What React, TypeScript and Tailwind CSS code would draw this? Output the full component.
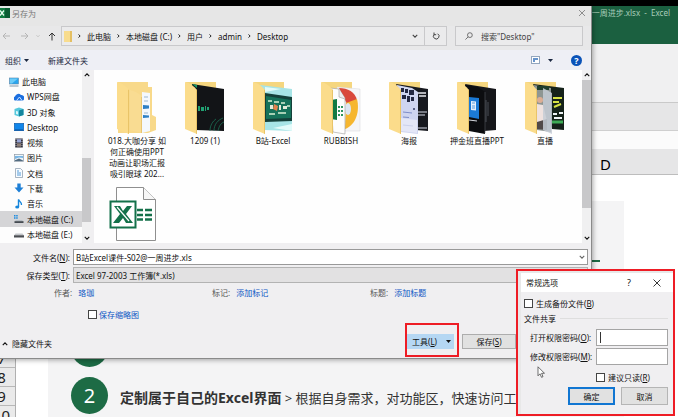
import React from 'react';
import type { ReactNode } from 'react';

const Chevron = ({ d, className }: { d: string; className: string }) => (
  <svg viewBox="0 0 8 8" className={className} fill="none" stroke="currentColor" strokeWidth="1.5" aria-hidden="true">
    <path d={d} />
  </svg>
);
const RIGHT = 'M2.5 1.5 5 4 2.5 6.5';
const DOWN = 'M1 2.5 4 5.5 7 2.5';
const UP = 'M1 5.5 4 2.5 7 5.5';

const Caret = () => (
  <svg viewBox="0 0 5 3" className="h-[3px] w-[5px]" aria-hidden="true">
    <path d="M0 0h5L2.500 3z" fill="currentColor" />
  </svg>
);

const ExcelBadge = () => (
  <svg viewBox="0 0 10 10" className="h-2.5 w-2.5 shrink-0" aria-hidden="true">
    <rect width="10" height="10" fill="#107c41" />
    <path d="M5 0h5v10H5z" fill="#0a5c33" />
    <path d="M0 2.5 4 7.5M4 2.5 0 7.5" stroke="#e8fff0" strokeWidth="1.3" />
  </svg>
);

/* Sidebar */

type Place = { name: string; icon: ReactNode; root?: boolean; active?: boolean };

const places: Place[] = [
  {
    name: '此电脑',
    root: true,
    icon: (
      <>
        <rect x="0.5" y="1" width="9" height="6" fill="#2aa5ee" stroke="#5b86a8" strokeWidth="0.6" />
        <path d="M1 1.500h8L3 6.500H1z" fill="#6bcbf8" />
        <path d="M0.500 9h9" stroke="#7f95a8" />
      </>
    ),
  },
  {
    name: 'WPS网盘',
    icon: (
      <>
        <path d="M1 8.500a2.200 2.200 0 0 1 0-4A3.500 3.500 0 0 1 7 3a3 3 0 0 1 2 5.500z" fill="#1b6fe0" />
        <path d="M2.500 8.500 5.500 5 8 8.500" stroke="#cfe6ff" strokeWidth="1" fill="none" />
      </>
    ),
  },
  {
    name: '3D 对象',
    icon: (
      <>
        <path d="M0.500 2 5 0.500 9.500 2v6L5 9.500 0.500 8z" fill="#55c8dc" />
        <path d="M5 3.500 9.500 2v6L5 9.500z" fill="#16869e" />
        <path d="M2 4l2 .6v3L2 7z" fill="#d9f7fb" />
      </>
    ),
  },
  {
    name: 'Desktop',
    icon: (
      <>
        <rect x="0.300" y="1.300" width="9.400" height="7.400" fill="#1186ea" stroke="#0a58a5" strokeWidth="0.600" />
        <path d="M1 8h8" stroke="#0b4f97" />
      </>
    ),
  },
  {
    name: '视频',
    icon: (
      <>
        <rect x="1.200" y="0.500" width="7.600" height="9" fill="#33333f" />
        <path d="M2 1v8M8 1v8" stroke="#c9c9d4" strokeDasharray="1 1" strokeWidth="0.800" />
        <rect x="3" y="1.200" width="4" height="3.300" fill="#98a5d6" />
        <rect x="3" y="5.300" width="4" height="3.300" fill="#8d7f78" />
      </>
    ),
  },
  {
    name: '图片',
    icon: (
      <>
        <rect x="0.500" y="1.500" width="9" height="7" fill="#eef6fb" stroke="#8f9aa5" strokeWidth="0.700" />
        <path d="M1 3h8v2L5 4.500 1 6z" fill="#79b6e5" />
        <path d="M1 7.200 5 5.500l4 2v.5H1z" fill="#526b80" />
      </>
    ),
  },
  {
    name: '文档',
    icon: (
      <>
        <path d="M1.500.5h5l2 2v7h-7z" fill="#f7fbff" stroke="#8496a8" strokeWidth="0.700" />
        <path d="M3 3h2M3 5h4M3 7h4" stroke="#3f8fd2" strokeWidth="0.900" />
      </>
    ),
  },
  { name: '下载', icon: <path d="M3.300.500h3.400v4h2.800L5 9.500.5 4.500h2.800z" fill="#1d7fd6" /> },
  {
    name: '音乐',
    icon: (
      <>
        <path d="M4.500.5v7.500" stroke="#1686dc" strokeWidth="1.400" />
        <path d="M4.500.5c.5 2 3.500 2.500 3 5.500" stroke="#1686dc" strokeWidth="1.300" fill="none" />
        <ellipse cx="3.200" cy="8" rx="2" ry="1.500" fill="#1686dc" />
      </>
    ),
  },
  {
    name: '本地磁盘 (C:)',
    active: true,
    icon: (
      <>
        <path d="M0 1h1.500v1.500H0zM2.200 1h1.500v1.500H2.200zM0 3.200h1.500v1.500H0zM2.200 3.200h1.500v1.500H2.200z" fill="#1a8be0" />
        <path d="M2 6h6l1.500 1.500H.5z" fill="#b8bec4" />
        <rect x="0.500" y="7.200" width="9" height="1.800" fill="#454b52" />
      </>
    ),
  },
  {
    name: '本地磁盘 (E:)',
    icon: (
      <>
        <path d="M1.500 4.500h7L10 6.500H0z" fill="#c3c6ca" />
        <rect y="6.300" width="10" height="2.200" fill="#4a4d52" />
      </>
    ),
  },
];

/* Folder thumbnails, drawn on a 40 x 53 grid */

const Folder = ({ children }: { children: ReactNode }) => (
  <svg viewBox="0 0 40 53" className="h-[53px] w-10" aria-hidden="true">
    <path d="M1 0h30v46H1z" fill="#f5d67f" />
    {children}
    <path d="M0 0c5 1 9 4 12 8v44L0 47z" fill="#fbdc8b" />
    <path d="M11 7.500l1 .5v44l-1-.5z" fill="#e9c468" />
  </svg>
);

const folders: { name: string; art: ReactNode }[] = [
  {
    name: '018.大咖分享 如何正确使用PPT动画让职场汇报吸引眼球 202...',
    art: (
      <>
        <path d="M1 0h30v5h4v28l4 2v13l-8 3H1z" fill="#f8d98a" />
        <path d="M25 10l8 1v38l-8 2z" fill="#f4f8fd" />
        <path d="M27 15h4M27 19h4M27 31h4" stroke="#9db7cf" />
        <path d="M26 23l6 .5v3l-6 .5zM26 33l6 .5v2l-6 .5z" fill="#2e7fc4" />
        <path d="M13 8c6 2 11 4 12 8v35l-12-3z" fill="#f9dc92" />
        <path d="M24.500 15v36" stroke="#e6c068" strokeWidth="0.800" />
      </>
    ),
  },
  {
    name: '1209 (1)',
    art: (
      <>
        <path d="M7 2l32 5v42l-28-1z" fill="#121417" />
        <path d="M13 24h2v5h-2zM16 25h3v4h-3zM20 24h1v5h-1zM22 25h2v3h-2z" fill="#20a273" />
        <path d="M25 49c0-6 3-10 6-12M29 49c0-7 4-11 9-13M33 49c1-5 3-8 6-9" stroke="#1c7d5d" strokeWidth="0.700" fill="none" />
        <path d="M7 2l5 1v3z" fill="#179a68" />
      </>
    ),
  },
  {
    name: 'B站-Excel',
    art: (
      <>
        <path d="M7 3l32 4v42l-28-1z" fill="#a7e4e6" />
        <path d="M12 5l16 2-16 3zM20 46l19-4v7z" fill="#e3fbfa" />
        <path d="M12 11l27 4v24l-27 1z" fill="#14403a" />
        <path d="M13 14l25 4v18l-25 1z" fill="#16725a" />
        <path d="M15 19h4M21 20h5M28 21h4M16 32h6M25 31h8M34 24h3" stroke="#d8efd4" strokeWidth="1.400" />
        <path d="M17 23h3v4h-3zM26 23h2v5h-2zM30 24h4v3h-4z" fill="#e3ebd9" />
        <path d="M21 22l4 2-1 5-4-2z" fill="#e3824d" />
      </>
    ),
  },
  {
    name: 'RUBBISH',
    art: (
      <>
        <path d="M16 5l23 2v42H18z" fill="#f5f5f7" stroke="#d6d6da" strokeWidth="0.500" />
        <path d="M18 6c9 0 16 4 18 12l-10 4z" fill="#d9483b" />
        <path d="M36 17c3 12-1 26-12 30l1-26z" fill="#f6b62f" />
        <ellipse cx="27" cy="27" rx="3" ry="6" fill="#dce5f2" />
        <path d="M9 6l9 1 6 9v36l-12-2z" fill="#fdfdfd" stroke="#9c9c9c" strokeWidth="0.600" />
        <path d="M18 7v8l6 2" fill="#eee" stroke="#9c9c9c" strokeWidth="0.600" />
        <path d="M10 18l6-1v21l-6-1z" fill="#117a43" />
        <path d="M17 25h5M17 29h5M17 33h5" stroke="#2d9460" strokeWidth="2" strokeDasharray="2 1" />
      </>
    ),
  },
  {
    name: '海报',
    art: (
      <>
        <path d="M7 2l32 5v42l-12-1z" fill="#17191f" />
        <path d="M29 11h8M30 14h7" stroke="#e8e8ee" strokeWidth="1.500" />
        <path d="M29 30h9M29 33h7M29 46h9" stroke="#d7dbe8" />
        <path d="M8 3l15 3 6 4v42l-17-2z" fill="#cfd5f0" />
        <path d="M12 6h3v4h-3zM16 7h3v4h-3zM20 8h5v5h-5zM13 13h4v4h-4zM18 14h3v6h-3zM22 15h3v4h-3z" fill="#232842" />
        <path d="M14 30l9 1M14 35l6 .5M14 43l10 1" stroke="#7e8dc9" />
        <circle cx="25" cy="27" r="1" fill="#333b66" />
        <path d="M12 36l16 2v13l-16-2z" fill="#eceefa" opacity="0.700" />
      </>
    ),
  },
  {
    name: '押金班直播PPT',
    art: (
      <>
        <path d="M8 2l31 5v41l-12 1z" fill="#15161a" />
        <path d="M29 18v22M31 20v14" stroke="#5f6470" strokeWidth="0.700" />
        <path d="M8 3l13 2 7 5v42l-16-3z" fill="#0c0d10" />
        <path d="M28 10v41" stroke="#55575e" strokeWidth="0.600" />
        <path d="M12 15l10 1v21l-10-2z" fill="#1b7ad6" />
        <path d="M14 19l5 .5v9l-5-.5z" fill="#e7f0fb" />
        <path d="M15 21h3M15 24h3M15 26h3" stroke="#1b7ad6" strokeWidth="0.700" />
        <path d="M12 38l8 1" stroke="#d5d8de" />
      </>
    ),
  },
  {
    name: '直播',
    art: (
      <>
        <path d="M8 2l31 4v42l-12-1z" fill="#15221a" />
        <path d="M28 16h9M28 20h6M36 22l-7 3" stroke="#d7e344" strokeWidth="2" />
        <path d="M28 32h4M34 31h4M29 36h8" stroke="#eef3f5" strokeWidth="1.800" />
        <path d="M27 40h11" stroke="#3dab55" strokeWidth="3" />
        <path d="M9 3l17 3v44l-14-2z" fill="#8e9693" />
        <path d="M12 6h12" stroke="#1f3d2c" strokeWidth="4" />
        <circle cx="15" cy="18" r="3" fill="#dcae95" />
        <path d="M12 22l6 1 4 16-10 6z" fill="#efe2df" />
        <path d="M12 40l10-3v11l-10-1z" fill="#514948" />
        <path d="M18 6l9 5v41l-9-4z" fill="#c5ccd6" opacity="0.850" />
      </>
    ),
  },
];

const XlsFile = () => (
  <svg viewBox="0 0 48 54" className="h-[54px] w-12" aria-hidden="true">
    <path d="M7.500.5h27l12 12v41h-39z" fill="#fff" stroke="#8f8f8f" />
    <path d="M34.500.5v12h12" fill="#f7f7f7" stroke="#8f8f8f" />
    <path d="M28 23h6M36 23h7M28 28h6M36 28h7M28 32.500h6M36 32.500h7" stroke="#15704a" strokeWidth="2.500" />
    <rect x="1.500" y="14.500" width="25" height="26" fill="#fff" stroke="#13714a" strokeWidth="2" />
    <path d="M5 19h6l3 5 4-5h5l-6 8 7 9h-7l-3-5-4 5H4l7-9z" fill="#13714a" />
    <path d="M8 20l12 14" stroke="#fff" strokeWidth="1.200" />
  </svg>
);

/* Small shared pieces */

const VScroll = ({ thumb }: { thumb: 'lower' | 'upper' }) => (
  <div className="flex w-[9px] shrink-0 flex-col items-center bg-[#f0f0f1]">
    <Chevron d={UP} className="m-0.5 h-[6px] w-[6px] shrink-0" />
    {thumb === 'lower' && <div className="h-[78px] shrink-0" />}
    <div className={thumb === 'lower' ? 'h-16 w-full bg-[#c8c8ca]' : 'h-32 w-full bg-[#c8c8ca]'} />
    <Chevron d={DOWN} className="mx-0.5 mt-auto mb-0.5 h-[6px] w-[6px] shrink-0" />
  </div>
);

const box = 'h-[9px] w-[9px] shrink-0 appearance-none border border-[#444] bg-white checked:bg-[#1a73d8]';

const Meta = ({ label, value, className }: { label: string; value: string; className: string }) => (
  <div className={`flex gap-[6px] ${className}`}>
    <span className="text-[#555]">{label}:</span>
    <a href="#meta" className="text-[#0b55c4]">{value}</a>
  </div>
);

function SaveDialog() {
  return (
    <section
      aria-label="另存为"
      className="absolute top-[6px] left-0 z-10 w-[592px] border-r border-b border-[#8a8a8a] bg-[#f0eff1] text-[8px] leading-[11px] text-[#111] shadow-[1px_1px_5px_rgba(0,0,0,0.35)]"
    >
      <header className="flex h-5 items-start bg-[#e6e6e6] pt-[2px] pr-[5px] text-[#777]">
        <ExcelBadge />
        <h1 className="ml-[2px] flex-1">另存为</h1>
        <button aria-label="关闭" className="mt-px text-[#777]">
          <svg viewBox="0 0 8 8" className="h-2 w-2" stroke="currentColor" strokeWidth="0.800">
            <path d="M1 1l6 6M7 1 1 7" />
          </svg>
        </button>
      </header>

      <div className="flex h-6 items-start bg-[#e8e8e9] pr-2">
        <nav aria-label="导航" className="flex h-5 w-[61px] items-center pl-[2px] text-[#b5b5b5]">
          <button aria-label="后退" className="w-[18px]">
            <svg viewBox="0 0 9 8" className="h-2 w-[9px]" fill="none" stroke="currentColor"><path d="M4 1 1 4l3 3M1 4h7" /></svg>
          </button>
          <button aria-label="前进" className="w-4">
            <svg viewBox="0 0 9 8" className="h-2 w-[9px]" fill="none" stroke="currentColor"><path d="M5 1l3 3-3 3M8 4H1" /></svg>
          </button>
          <button aria-label="最近位置" className="w-3">
            <Chevron d={DOWN} className="h-1 w-1" />
          </button>
          <button aria-label="上移" className="text-[#333]">
            <svg viewBox="0 0 8 9" className="h-[9px] w-2" fill="none" stroke="currentColor"><path d="M1 4l3-3 3 3M4 1v7.500" /></svg>
          </button>
        </nav>
        <div className="mr-2 flex h-5 flex-1 border border-[#c9c9cb] bg-[#ebebec]">
          <div className="flex flex-1 items-center gap-[5px] pl-[2px]">
            <span className="h-[11px] w-2 border-r-2 border-[#e4bf63] bg-[#f8dc8e]" />
            {['此电脑', '本地磁盘 (C:)', '用户', 'admin', 'Desktop'].map((p) => (
              <React.Fragment key={p}>
                <Chevron d={RIGHT} className="h-[6px] w-[5px]" />
                <a href="#path">{p}</a>
              </React.Fragment>
            ))}
          </div>
          <button aria-label="展开路径" className="px-[6px] text-[#444]"><Chevron d={DOWN} className="h-[6px] w-[6px]" /></button>
          <button aria-label="刷新" className="w-[22px] border-l border-[#c9c9cb] pl-[7px]">
            <svg viewBox="0 0 8 8" className="h-2 w-2" fill="none" stroke="#444"><path d="M5.500 1.700A2.800 2.800 0 1 1 2 2.500M2 .5v2.200h2.200" /></svg>
          </button>
        </div>
        <label className="flex h-5 w-32 items-center gap-2 border border-[#c9c9cb] bg-[#ebebec] pl-[9px]">
          <svg viewBox="0 0 9 9" className="h-2 w-2 shrink-0" fill="none" stroke="#555" strokeWidth="0.900"><circle cx="5.500" cy="3.500" r="2.700" /><path d="M3.500 5.500.5 8.500" /></svg>
          <input aria-label="搜索" placeholder={'搜索"Desktop"'} className="w-full bg-transparent placeholder:text-[#444] placeholder:opacity-100 outline-none" />
        </label>
      </div>

      <div className="flex h-5 items-center bg-[#eeeff5] px-[5px] text-[#1b2740]">
        <button className="flex items-center gap-[3px]">组织 <Caret /></button>
        <button className="ml-[19px]">新建文件夹</button>
        <button aria-label="视图" className="ml-auto flex items-center gap-2">
          <svg viewBox="0 0 9 8" className="h-2 w-[9px]"><rect x=".5" y=".5" width="8" height="7" fill="#fff" stroke="#93a6bd" /><path d="M2 3h5M2 5h2" stroke="#3671bb" strokeWidth="1.500" /></svg>
          <Caret />
        </button>
        <button aria-label="帮助" className="mr-1 ml-[18px] h-[11px] w-[11px] rounded-full bg-[#0a53b8] text-center text-[9px] font-bold text-white">?</button>
      </div>

      <div className="flex h-[173px]">
        <ul className="flex w-[82px] flex-col bg-[#fdfdfd] pt-1 pb-px">
          {places.map((p) => (
            <li key={p.name} className={`flex flex-1 items-center gap-[3px] ${p.root ? 'pl-[9px]' : 'pl-[14px]'} ${p.active ? 'bg-[#d5d5d7]' : ''}`}>
              <svg viewBox="0 0 10 10" className="h-2.5 w-2.5 shrink-0" aria-hidden="true">{p.icon}</svg>
              <span className="whitespace-nowrap">{p.name}</span>
            </li>
          ))}
        </ul>
        <VScroll thumb="lower" />
        <ul className="ml-[3px] grid flex-1 grid-cols-7 grid-rows-[105px_1fr] bg-[#fefefe] pt-3 pr-[3px] pl-[9px]">
          {folders.map((f) => (
            <li key={f.name} className="flex flex-col items-center">
              <Folder>{f.art}</Folder>
              <span className="w-[60px] text-center break-all">{f.name}</span>
            </li>
          ))}
          <li aria-label="B站Excel课件-S02@一周进步.xls" className="flex justify-center pr-2"><XlsFile /></li>
        </ul>
        <VScroll thumb="upper" />
      </div>

      <form className="pt-[6px]" onSubmit={(e) => e.preventDefault()}>
        <div className="flex items-center gap-[3px] pr-[3px]">
          <label htmlFor="filename" className="w-[70px] text-right">文件名(<u>N</u>):</label>
          <div className="flex h-4 flex-1 items-center border border-[#999] bg-white pr-[2px] pl-[2px]">
            <input id="filename" defaultValue="B站Excel课件-S02@一周进步.xls" className="flex-1 bg-transparent outline-none" />
            <Chevron d={DOWN} className="h-[6px] w-[6px] text-[#666]" />
          </div>
        </div>
        <div className="mt-[2px] flex items-center gap-[3px] pr-[3px]">
          <label htmlFor="filetype" className="w-[70px] text-right">保存类型(<u>T</u>):</label>
          <select id="filetype" className="h-4 flex-1 appearance-none border border-[#b3b3b3] bg-[#e2e1e2] pl-[2px] outline-none">
            <option>Excel 97-2003 工作簿(*.xls)</option>
          </select>
        </div>
        <div className="mt-1 flex pl-[54px]">
          <Meta label="作者" value="珞珈" className="w-[158px]" />
          <Meta label="标记" value="添加标记" className="w-[158px]" />
          <Meta label="标题" value="添加标题" className="" />
        </div>
        <label className="mt-[11px] ml-[88px] flex w-fit items-center gap-[2px] text-[#0b55c4]">
          <input type="checkbox" className={box} />
          保存缩略图
        </label>
        <div className="mt-[14px] flex h-[24px] items-start">
          <button type="button" className="flex h-[19px] items-center gap-1 pl-[2px]">
            <Chevron d={UP} className="h-[6px] w-[6px]" />
            隐藏文件夹
          </button>
          <div className="relative ml-auto">
            <button type="button" className="flex h-[15px] w-12 items-center justify-between bg-[#b5d7f3] pr-[3px] pl-[6px]">
              <span>工具(<u>L</u>)</span>
              <Caret />
            </button>
            <div className="pointer-events-none absolute -top-[11px] -right-[5px] -bottom-2 -left-px border-2 border-[#ee1c25]" />
          </div>
          <button type="submit" className="mr-[75px] ml-2 h-[15px] w-[54px] border border-[#adadad] bg-[#e1e1e1]">保存(<u>S</u>)</button>
        </div>
      </form>
    </section>
  );
}

function OptionsDialog() {
  const field = 'h-[17px] w-[72px] border border-[#a5a5a5] bg-white px-[2px] outline-none';
  return (
    <div className="absolute top-[269px] left-[516px] z-20 w-[159px] border-2 border-[#ee1c25] bg-[#e8e8e8] pt-[2px] pl-[3px] text-[8px] leading-[11px] text-[#111]">
      <section aria-label="常规选项" className="bg-[#f0eff1] pb-[9px]">
        <header className="flex h-[19px] items-center bg-white pr-3 pl-[5px]">
          <h2 className="flex-1">常规选项</h2>
          <button aria-label="帮助" className="mr-[22px] text-[9px]">?</button>
          <button aria-label="关闭">
            <svg viewBox="0 0 8 8" className="h-2 w-2" stroke="#222" strokeWidth="0.900"><path d="M.5.5l7 7M7.500.5l-7 7" /></svg>
          </button>
        </header>
        <form className="pt-[6px] pr-[5px]" onSubmit={(e) => e.preventDefault()}>
          <label className="flex items-center gap-[3px] pl-[3px]">
            <input type="checkbox" className={box} />
            <span>生成备份文件(<u>B</u>)</span>
          </label>
          <div className="mt-[4px] flex items-center gap-1 pl-[3px]">
            <span>文件共享</span>
            <span className="h-px flex-1 bg-[#dedede]" />
          </div>
          <div className="mt-[5px] flex items-center justify-between pl-[9px]">
            <label htmlFor="open-pw">打开权限密码(<u>O</u>):</label>
            <div className={`flex items-center ${field}`}>
              <span className="ml-px h-[11px] w-px shrink-0 bg-[#333]" />
              <input id="open-pw" type="password" className="w-full bg-transparent outline-none" />
            </div>
          </div>
          <div className="mt-[2px] flex items-center justify-between pl-[9px]">
            <label htmlFor="edit-pw">修改权限密码(<u>M</u>):</label>
            <input id="edit-pw" type="password" className={field} />
          </div>
          <label className="mt-[7px] ml-[75px] flex items-center gap-[3px]">
            <input type="checkbox" className={box} />
            <span>建议只读(<u>R</u>)</span>
          </label>
          <div className="mt-[4px] flex justify-end gap-[6px]">
            <button type="submit" className="h-[18px] w-[47px] border-2 border-[#1176d2] bg-[#e1e1e1]">确定</button>
            <button type="button" className="h-[18px] w-[47px] border border-[#b5b5b5] bg-[#e1e1e1]">取消</button>
          </div>
        </form>
      </section>
      <svg viewBox="0 0 8 12" className="absolute top-[95px] left-[19px] h-3 w-2" aria-hidden="true">
        <path d="M1 .8v9l2-2 1.500 3.500 1.500-.6L4.600 7.300h2.900z" fill="#fff" stroke="#333" strokeWidth="0.700" />
      </svg>
    </div>
  );
}

function Workbook() {
  return (
    <main className="flex min-h-screen flex-col bg-white">
      <div className="h-[6px] bg-black" />
      <div className="flex h-[38px] justify-end bg-[#1b6040] pt-[1px] pr-2 text-[8px] leading-[11px] text-[#a9cdb9]">一周进步.xlsx&nbsp; - &nbsp;Excel</div>
      <div className="h-[59px] border-b border-[#c9c9c9] bg-[#f0f0f1]" />
      <div className="h-7 border-b border-[#cfcfcf] bg-[#e6e6e7]" />
      <div className="h-[18px] bg-[#fbfbfb]" />
      <div className="flex h-[26px] items-center justify-end border-b border-[#bdbdbd] bg-[#e6e6e7] pt-1.5 pr-[67px] text-[15px] text-black">D</div>
      <div className="flex flex-1">
        <ol className="w-4 shrink-0 border-r border-[#b0b0b0] bg-[#eaeaea] pt-[174px] text-[15px] leading-[19px] text-[#222]">
          {[7, 8, 9, 10].map((n) => (
            <li key={n} className="flex h-[19px] justify-center border-b border-[#b8b8b8] pr-3">{n}</li>
          ))}
        </ol>
        <article className="mt-[26px] mr-[54px] ml-8 flex-1 bg-[#f4f4f5]">
          <div className="mx-6 mt-[59px] h-[2px] bg-[#1d6b45]" />
          <ol className="mt-[68px] flex flex-col gap-[10px] pl-[23px]">
            <li><Step n={1} /></li>
            <li className="flex items-center gap-3">
              <Step n={2} />
              <p className="pt-1 text-[14px] whitespace-nowrap text-[#333]">
                <strong>定制属于自己的Excel界面</strong>
                <span className="text-[13px]"> &gt; 根据自身需求，对功能区，快速访问工具栏</span>
              </p>
            </li>
          </ol>
        </article>
      </div>
    </main>
  );
}

const Step = ({ n }: { n: number }) => (
  <span className="flex h-[37px] w-[37px] shrink-0 items-center justify-center rounded-full bg-[#1d6b45] text-[20px] text-white">{n}</span>
);

export default function App() {
  return (
    <div className="relative h-screen overflow-hidden font-['Noto_Sans','Noto_Sans_CJK_SC',sans-serif]">
      <Workbook />
      <SaveDialog />
      <OptionsDialog />
    </div>
  );
}
